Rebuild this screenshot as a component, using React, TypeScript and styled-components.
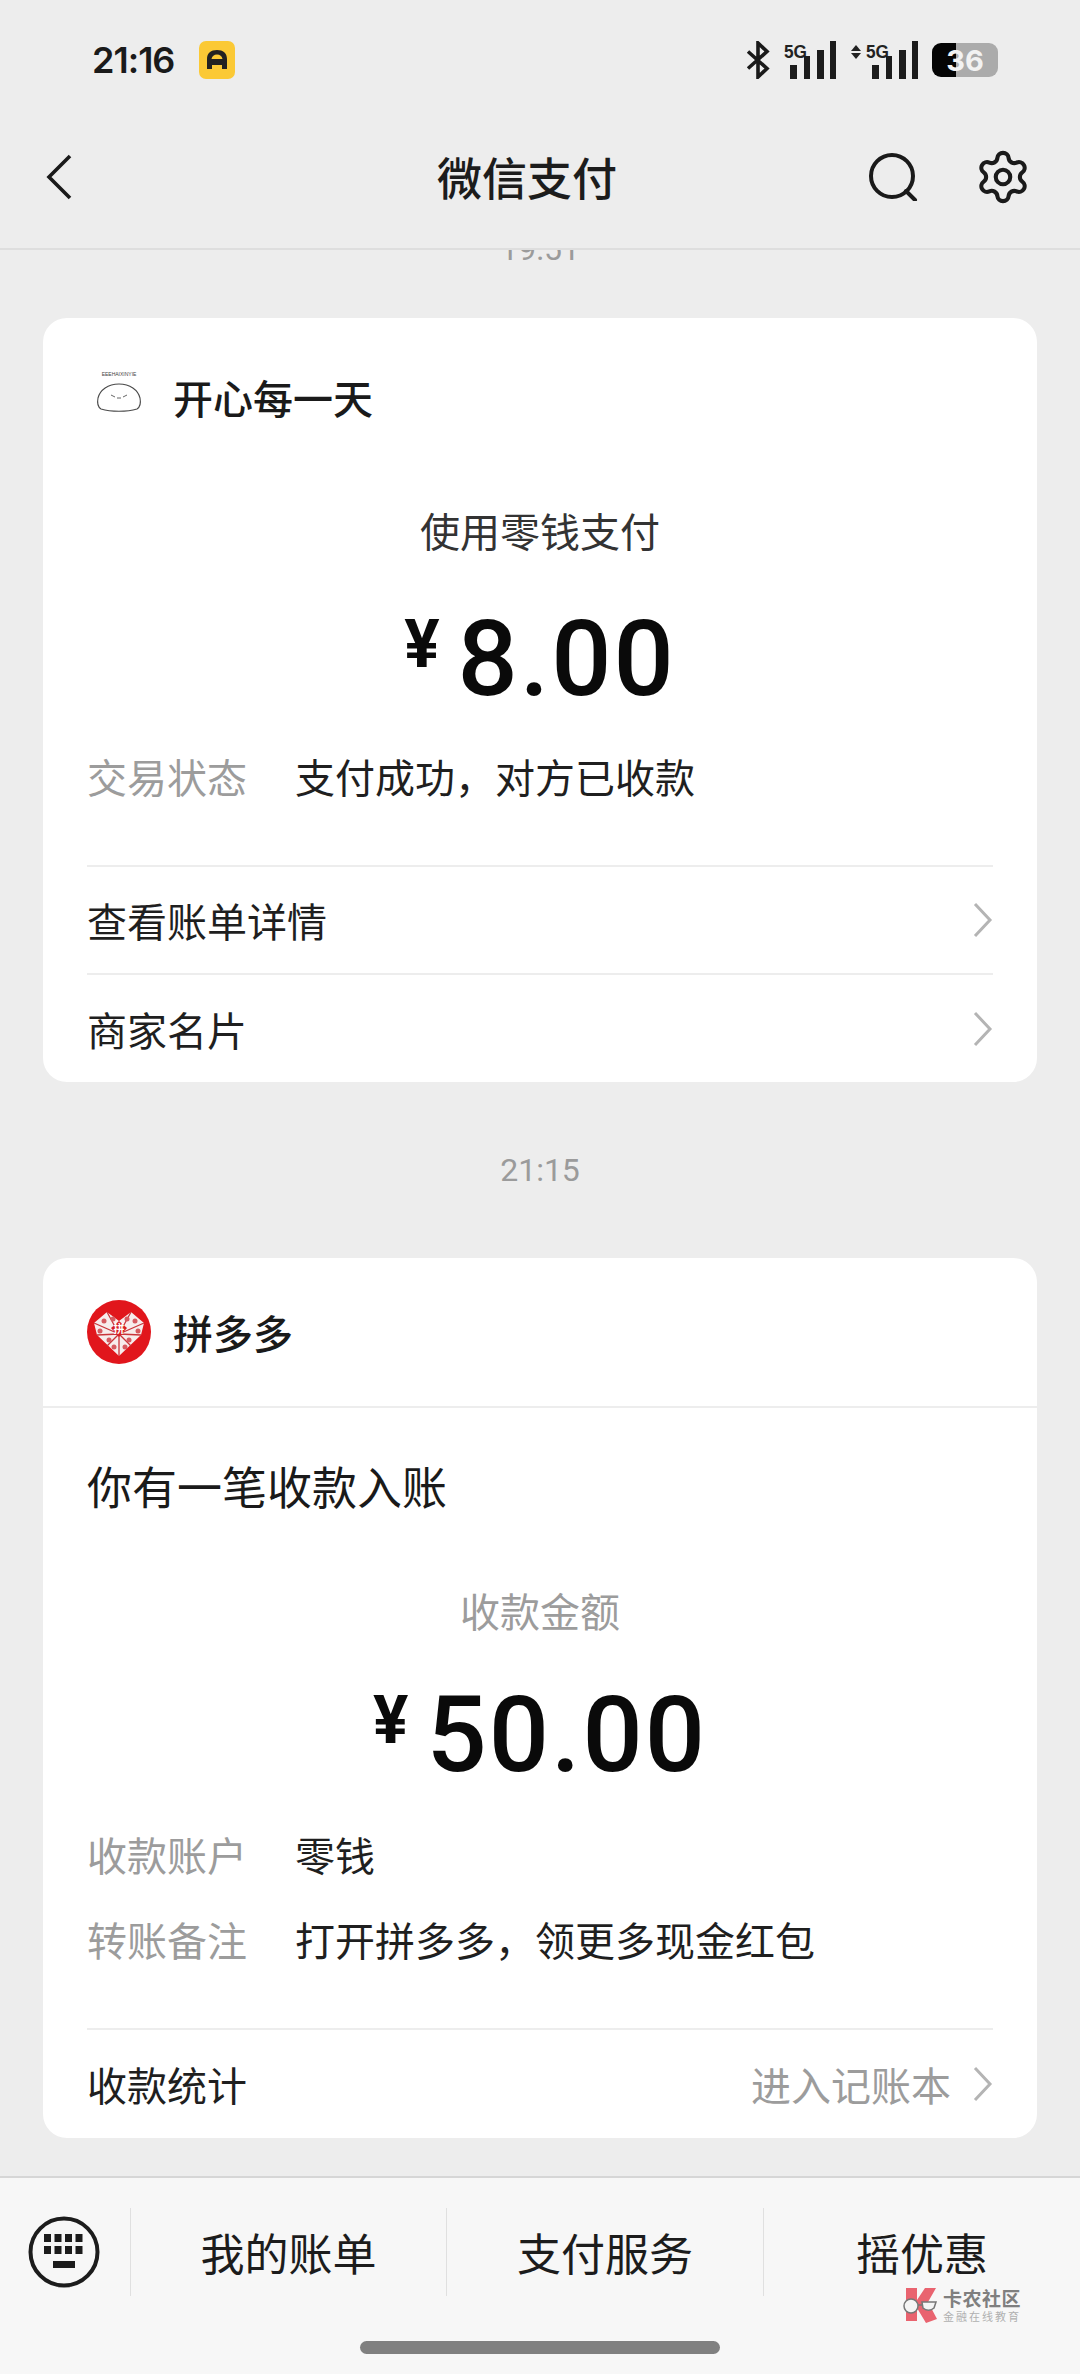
import React from "react";
import styled, { createGlobalStyle } from "styled-components";
import { Settings, BellOff } from "lucide-react";

const cjk = `"Noto Sans CJK SC", "Noto Sans", sans-serif`;

const GlobalStyle = createGlobalStyle`
  html, body {
    margin: 0;
    padding: 0;
    background: #ededed;
  }
  * {
    box-sizing: border-box;
  }
`;

const Page = styled.div`
  width: 1080px;
  height: 2374px;
  display: flex;
  flex-direction: column;
  overflow: hidden;
  background: #ededed;
  font-family: ${cjk};
  color: #1a1a1a;
`;

const StatusBar = styled.div`
  height: 120px;
  padding: 0 82px 0 92px;
  display: flex;
  align-items: center;
  justify-content: space-between;
`;

const StatusGroup = styled.div<{ $gap: number }>`
  display: flex;
  align-items: center;
  gap: ${(p) => p.$gap}px;
`;

const Clock = styled.span`
  font-family: "Inter", sans-serif;
  font-size: 36px;
  font-weight: 600;
  letter-spacing: -1px;
  color: #1a1a1a;
`;

const Battery = styled.div`
  width: 66px;
  height: 34px;
  border-radius: 9px;
  background: linear-gradient(90deg, #050505 0 36%, #ababab 36% 100%);
  display: flex;
  align-items: center;
  justify-content: center;
  font-family: "Inter", sans-serif;
  font-size: 29px;
  font-weight: 700;
  color: #f2f2f2;
`;

const NavBar = styled.div`
  height: 130px;
  padding: 0 46px;
  display: grid;
  grid-template-columns: 1fr auto 1fr;
  align-items: center;
  border-bottom: 2px solid #dedede;
`;

const NavTitle = styled.div`
  position: relative;
  left: -1px;
  top: -7px;
  display: flex;
  align-items: center;
  font-size: 45px;
  font-weight: 500;
  line-height: 60px;
  color: #1c1c1c;
`;

const NavLeft = styled.div`
  display: flex;
  align-items: center;
  margin-top: -14px;
`;

const NavRight = styled.div`
  display: flex;
  align-items: center;
  justify-content: flex-end;
  gap: 56px;
  margin-top: -14px;
  margin-right: 2px;
`;

const BellSlot = styled.div`
  width: 0;
  display: flex;
  align-items: center;
  color: #b9b9b9;
  margin-left: 24px;
`;

const Feed = styled.div`
  flex: 1;
  padding: 0 43px;
  display: flex;
  flex-direction: column;
  overflow: hidden;
`;

const ClippedTime = styled.div`
  height: 15px;
  overflow: hidden;
  display: flex;
  align-items: flex-end;
  justify-content: center;
  font-family: "Roboto", sans-serif;
  font-size: 32px;
  line-height: 32px;
  color: #9b9b9b;
  margin-bottom: 53px;
`;

const TimeLabel = styled.div`
  height: 176px;
  display: flex;
  align-items: center;
  justify-content: center;
  font-family: "Roboto", sans-serif;
  font-size: 32px;
  color: #9b9b9b;
`;

const Card = styled.div`
  background: #ffffff;
  border-radius: 24px;
  padding: 0 44px;
  display: flex;
  flex-direction: column;
`;

const CardHead = styled.div<{ $h: number; $ruled?: boolean }>`
  height: ${(p) => p.$h}px;
  margin: 0 -44px;
  padding: 0 44px;
  display: flex;
  align-items: center;
  gap: 22px;
  font-size: 40px;
  font-weight: 500;
  color: #1a1a1a;
  border-bottom: ${(p) => (p.$ruled ? "2px solid #ededed" : "none")};
`;

const Avatar = styled.div`
  width: 64px;
  height: 64px;
  flex: none;
`;

const Heading = styled.div`
  height: 154px;
  display: flex;
  align-items: center;
  font-size: 45px;
  color: #1a1a1a;
`;

const CenterLabel = styled.div<{ $h: number; $muted?: boolean }>`
  height: ${(p) => p.$h}px;
  display: flex;
  align-items: center;
  justify-content: center;
  font-size: 40px;
  color: ${(p) => (p.$muted ? "#9c9c9c" : "#333333")};
`;

const Amount = styled.div<{ $h: number }>`
  height: ${(p) => p.$h}px;
  display: flex;
  align-items: center;
  justify-content: center;
  gap: 18px;
  color: #0a0a0a;
`;

const Yen = styled.span`
  font-family: "Roboto", sans-serif;
  font-size: 66px;
  font-weight: 700;
  margin-top: -28px;
`;

const Digits = styled.span`
  font-family: "Roboto", sans-serif;
  font-size: 106px;
  font-weight: 500;
  letter-spacing: 2px;
`;

const DetailRow = styled.div`
  height: 85px;
  display: flex;
  align-items: center;
  font-size: 40px;
`;

const DetailKey = styled.span`
  width: 208px;
  flex: none;
  color: #9c9c9c;
`;

const DetailValue = styled.span`
  color: #1f1f1f;
`;

const LinkRow = styled.div<{ $h: number; $gapTop?: number }>`
  height: ${(p) => p.$h}px;
  margin-top: ${(p) => p.$gapTop ?? 0}px;
  display: flex;
  align-items: center;
  justify-content: space-between;
  border-top: 2px solid #ededed;
  font-size: 40px;
  color: #1f1f1f;
`;

const LinkExtra = styled.div`
  display: flex;
  align-items: center;
  gap: 22px;
  color: #9c9c9c;
`;

const BottomBar = styled.div`
  position: relative;
  height: 198px;
  flex: none;
  background: #f7f7f7;
  border-top: 2px solid #d6d6d6;
  padding-top: 30px;
  display: grid;
  grid-template-columns: 130px 316px 317px 1fr;
  align-items: start;
`;

const KeyboardCell = styled.div`
  height: 88px;
  display: flex;
  align-items: center;
  justify-content: center;
  padding-right: 2px;
`;

const MenuCell = styled.div`
  height: 88px;
  display: flex;
  align-items: center;
  justify-content: center;
  border-left: 1px solid #e0e0e0;
  font-size: 44px;
  color: #1c1c1c;
`;

const HomeBar = styled.div`
  position: absolute;
  left: 360px;
  top: 163px;
  width: 360px;
  height: 13px;
  border-radius: 7px;
  background: #808080;
`;

const Watermark = styled.div`
  position: absolute;
  left: 900px;
  top: 109px;
  display: flex;
  align-items: center;
  gap: 3px;
`;

const WatermarkText = styled.div`
  display: flex;
  flex-direction: column;
  align-items: flex-start;
`;

const WatermarkTitle = styled.span`
  font-size: 19px;
  line-height: 22px;
  font-weight: 700;
  letter-spacing: 0.5px;
  color: #7f7f7f;
`;

const WatermarkSub = styled.span`
  font-size: 11px;
  line-height: 14px;
  letter-spacing: 2px;
  color: #b0b0b0;
`;

function Signal({ arrows }: { arrows?: boolean }) {
  const off = arrows ? 16 : 0;
  return (
    <svg width={off + 52} height="38" viewBox={`0 0 ${off + 52} 38`}>
      {arrows && (
        <g fill="#222">
          <path d="M5 4l5 6H0z" transform="translate(1 0)" />
          <path d="M5 18l5-6H0z" transform="translate(1 0)" />
        </g>
      )}
      <text
        x={off}
        y="17"
        fontFamily="Liberation Sans, sans-serif"
        fontSize="19"
        fontWeight="700"
        fill="#222"
        textLength="23"
        lengthAdjust="spacingAndGlyphs"
      >
        5G
      </text>
      <g fill="#1c1c1c">
        <rect x={off + 6} y="24" width="7" height="14" />
        <rect x={off + 20} y="15" width="6" height="23" />
        <rect x={off + 33} y="9" width="7" height="29" />
        <rect x={off + 46} y="0" width="6" height="38" />
      </g>
    </svg>
  );
}

function BluetoothIcon() {
  return (
    <svg width="24" height="38" viewBox="0 0 24 38" fill="none" stroke="#1a1a1a" strokeWidth="3.6">
      <path d="M2 10.5l19 17L12 36V2l9 8.5-19 17" />
    </svg>
  );
}

function AppBadge() {
  return (
    <svg width="36" height="38" viewBox="0 0 36 38">
      <rect width="36" height="38" rx="7" fill="#fbc935" />
      <path
        d="M8 28V18c0-6 4-9 10-9s10 3 10 9v10h-5v-4H13v4z"
        fill="#222"
      />
      <path d="M12.5 18c.6-3 2.500-4.500 5.500-4.500s4.900 1.500 5.500 4.500z" fill="#fbc935" />
    </svg>
  );
}

function BackIcon() {
  return (
    <svg width="26" height="46" viewBox="0 0 26 46" fill="none" stroke="#1a1a1a" strokeWidth="3.6">
      <path d="M24 2L3 23l21 21" />
    </svg>
  );
}

function SearchIcon() {
  return (
    <svg width="50" height="48" viewBox="0 0 50 48" fill="none" stroke="#1a1a1a" strokeWidth="4">
      <circle cx="24" cy="23" r="21" />
      <path d="M38 38l9 9" strokeLinecap="round" />
    </svg>
  );
}

function ChevronIcon() {
  return (
    <svg width="20" height="36" viewBox="0 0 20 36" fill="none" stroke="#b4b4b4" strokeWidth="3">
      <path d="M2 2l15 16L2 34" />
    </svg>
  );
}

function ChickAvatar() {
  return (
    <svg width="64" height="64" viewBox="0 0 64 64">
      <text x="32" y="11" textAnchor="middle" fontFamily="Liberation Sans, sans-serif" fontSize="5" fill="#444">
        EEEHAIXINYIE
      </text>
      <path
        d="M14 44c-3-2-4-6-3-11 2-8 10-14 21-14s19 6 21 14c1 5 0 9-3 11-10 3-26 3-36 0z"
        fill="#fff"
        stroke="#4a4a4a"
        strokeWidth="1.100"
      />
      <path d="M24 30l4 2M40 30l-4 2M30 33h4" stroke="#666" strokeWidth="1" fill="none" />
    </svg>
  );
}

function PddLogo() {
  return (
    <svg width="64" height="64" viewBox="0 0 64 64">
      <circle cx="32" cy="32" r="32" fill="#e1161c" />
      <path d="M7 23L20 12l12 9 12-9 13 11-3 12-22 21-22-21z" fill="#f7ecec" />
      <path
        d="M7 23l25 11M57 23L32 34M20 12l12 22 12-22M10 35l22-1 22 1M32 34v22M20 46l12-12 12 12"
        stroke="#c9343a"
        strokeWidth="1.300"
        fill="none"
      />
      <path d="M24 28l8-7 8 7-8 9z" fill="#d81e24" />
      <text x="32" y="33" textAnchor="middle" fontFamily="Noto Sans CJK SC, sans-serif" fontSize="11" fontWeight="700" fill="#fff">
        拼
      </text>
      <g fill="#d65a60">
        <circle cx="17" cy="21" r="2.500" />
        <circle cx="26" cy="19" r="2.500" />
        <circle cx="40" cy="19" r="2.500" />
        <circle cx="48" cy="21" r="2.500" />
        <circle cx="13" cy="31" r="2.500" />
        <circle cx="51" cy="31" r="2.500" />
        <circle cx="22" cy="40" r="2.500" />
        <circle cx="42" cy="40" r="2.500" />
        <circle cx="27" cy="47" r="2.500" />
        <circle cx="38" cy="47" r="2.500" />
      </g>
    </svg>
  );
}

function KeyboardIcon() {
  const keys = [0, 1, 2, 3];
  return (
    <svg width="72" height="72" viewBox="0 0 72 72">
      <circle cx="36" cy="36" r="33.500" fill="none" stroke="#1c1c1c" strokeWidth="4" />
      <g fill="#1c1c1c">
        {keys.map((k) => (
          <rect key={`a${k}`} x={16 + k * 10.500} y="18" width="7" height="8" />
        ))}
        {keys.map((k) => (
          <rect key={`b${k}`} x={16 + k * 10.500} y="30" width="7" height="8" />
        ))}
        <rect x="25" y="45" width="22" height="7" />
      </g>
    </svg>
  );
}

function WatermarkLogo() {
  return (
    <svg width="40" height="36" viewBox="0 0 40 36">
      <path d="M6 1h11v12l8-12h11l-8 14 9 17-11 4-9-15v13H6z" fill="#e9636f" />
      <circle cx="11" cy="19" r="7" fill="#f4f4f4" stroke="#777" strokeWidth="1.500" />
      <path d="M22 15h14l-2 6c-3 3-8 3-11 0z" fill="#f4f4f4" stroke="#777" strokeWidth="1.500" />
      <path d="M18 18h4" stroke="#777" strokeWidth="1.500" />
    </svg>
  );
}

export default function App() {
  return (
    <Page>
      <GlobalStyle />
      <StatusBar>
        <StatusGroup $gap={25}>
          <Clock>21:16</Clock>
          <AppBadge />
        </StatusGroup>
        <StatusGroup $gap={14}>
          <BluetoothIcon />
          <Signal />
          <Signal arrows />
          <Battery>36</Battery>
        </StatusGroup>
      </StatusBar>
      <NavBar>
        <NavLeft>
          <BackIcon />
        </NavLeft>
        <NavTitle>
          微信支付
          <BellSlot>
            <BellOff size={36} strokeWidth={1.5} />
          </BellSlot>
        </NavTitle>
        <NavRight>
          <SearchIcon />
          <Settings size={58} strokeWidth={1.7} />
        </NavRight>
      </NavBar>
      <Feed>
        <ClippedTime>19:51</ClippedTime>
        <Card>
          <CardHead $h={158}>
            <Avatar>
              <ChickAvatar />
            </Avatar>
            开心每一天
          </CardHead>
          <CenterLabel $h={108}>使用零钱支付</CenterLabel>
          <Amount $h={149}>
            <Yen>¥</Yen>
            <Digits>8.00</Digits>
          </Amount>
          <DetailRow>
            <DetailKey>交易状态</DetailKey>
            <DetailValue>支付成功，对方已收款</DetailValue>
          </DetailRow>
          <LinkRow $h={108} $gapTop={47}>
            查看账单详情
            <ChevronIcon />
          </LinkRow>
          <LinkRow $h={109}>
            商家名片
            <ChevronIcon />
          </LinkRow>
        </Card>
        <TimeLabel>21:15</TimeLabel>
        <Card>
          <CardHead $h={150} $ruled>
            <Avatar>
              <PddLogo />
            </Avatar>
            拼多多
          </CardHead>
          <Heading>你有一笔收款入账</Heading>
          <CenterLabel $h={96} $muted>
            收款金额
          </CenterLabel>
          <Amount $h={153}>
            <Yen>¥</Yen>
            <Digits>50.00</Digits>
          </Amount>
          <DetailRow>
            <DetailKey>收款账户</DetailKey>
            <DetailValue>零钱</DetailValue>
          </DetailRow>
          <DetailRow>
            <DetailKey>转账备注</DetailKey>
            <DetailValue>打开拼多多，领更多现金红包</DetailValue>
          </DetailRow>
          <LinkRow $h={110} $gapTop={47}>
            收款统计
            <LinkExtra>
              进入记账本
              <ChevronIcon />
            </LinkExtra>
          </LinkRow>
        </Card>
      </Feed>
      <BottomBar>
        <KeyboardCell>
          <KeyboardIcon />
        </KeyboardCell>
        <MenuCell>我的账单</MenuCell>
        <MenuCell>支付服务</MenuCell>
        <MenuCell>摇优惠</MenuCell>
        <Watermark>
          <WatermarkLogo />
          <WatermarkText>
            <WatermarkTitle>卡农社区</WatermarkTitle>
            <WatermarkSub>金融在线教育</WatermarkSub>
          </WatermarkText>
        </Watermark>
        <HomeBar />
      </BottomBar>
    </Page>
  );
}
